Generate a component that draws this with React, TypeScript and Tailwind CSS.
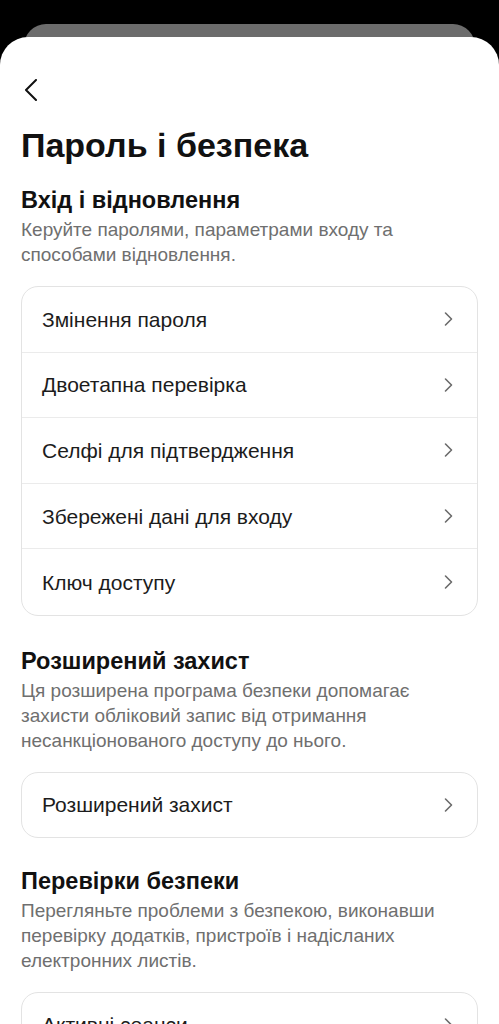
import React from "react";

const Chevron = () => (
  <svg width="11" height="16" viewBox="0 0 11 16" fill="none" className="shrink-0">
    <path d="M2.5 2 L8.5 8 L2.5 14" stroke="#6b6b6b" strokeWidth="1.6" strokeLinecap="round" strokeLinejoin="round" />
  </svg>
);

const Row = ({ label, last, h }: { label: string; last?: boolean; h: string }) => (
  <div className={`flex items-center justify-between ${h} pl-[20px] pr-[23px] ${last ? "" : "border-b border-[#ebebeb]"}`}>
    <span className="text-[21px] text-[#1c1c1c] leading-none">{label}</span>
    <Chevron />
  </div>
);

const Section = ({ title, desc, items, h }: { title: string; desc: string[]; items: string[]; h: string }) => (
  <div>
    <h2 className="text-[23.5px] font-bold text-[#111] leading-[28px]">{title}</h2>
    <p className="mt-[3px] text-[19px] text-[#6f6f6f] leading-[25px]">
      {desc.map((d, i) => (
        <React.Fragment key={i}>
          {d}
          {i < desc.length - 1 && <br />}
        </React.Fragment>
      ))}
    </p>
    <div className="mt-[19px] border border-[#e3e3e3] rounded-[17px] overflow-hidden">
      {items.map((it, i) => (
        <Row key={it} label={it} h={h} last={i === items.length - 1} />
      ))}
    </div>
  </div>
);

export default function App() {
  return (
    <div className="bg-black min-h-screen h-[1024px] overflow-hidden" style={{ fontFamily: "'Liberation Sans', Arial, sans-serif" }}>
      <div className="pt-[24px]">
        <div className="mx-[24px] h-[40px] rounded-t-[22px] bg-[#6c6c6c]" />
        <div className="relative -mt-[27px] bg-white rounded-t-[28px] px-[21px] pb-10">
          <div className="pt-[42px]">
            <svg width="20" height="22" viewBox="0 0 20 22" fill="none" className="ml-[1px]">
              <path d="M14 1 L4 11 L14 21" stroke="#111" strokeWidth="2" strokeLinecap="round" strokeLinejoin="round" />
            </svg>
          </div>
          <h1 className="mt-[24px] text-[34px] font-bold text-[#111] leading-[40px]">Пароль і безпека</h1>
          <div className="mt-[21px]">
            <Section
              title="Вхід і відновлення"
              desc={["Керуйте паролями, параметрами входу та", "способами відновлення."]}
              items={["Змінення пароля", "Двоетапна перевірка", "Селфі для підтвердження", "Збережені дані для входу", "Ключ доступу"]}
              h="h-[65.6px]"
            />
          </div>
          <div className="mt-[31px]">
            <Section
              title="Розширений захист"
              desc={["Ця розширена програма безпеки допомагає", "захисти обліковий запис від отримання", "несанкціонованого доступу до нього."]}
              items={["Розширений захист"]}
              h="h-[64px]"
            />
          </div>
          <div className="mt-[29px]">
            <Section
              title="Перевірки безпеки"
              desc={["Перегляньте проблеми з безпекою, виконавши", "перевірку додатків, пристроїв і надісланих", "електронних листів."]}
              items={["Активні сеанси"]}
              h="h-[64px]"
            />
          </div>
        </div>
      </div>
    </div>
  );
}
